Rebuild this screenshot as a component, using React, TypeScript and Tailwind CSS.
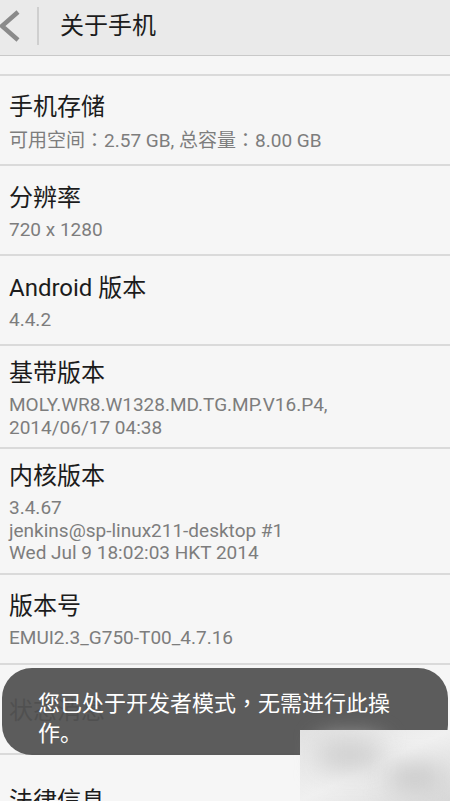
import React from 'react';

interface InfoRow {
  title: string;
  lines: React.ReactNode[];
}

// fullwidth punctuation sits centred in the reference, as in the TC face
const P = ({ c }: { c: string }) => (
  <span style={{ fontFamily: '"Noto Sans CJK TC", sans-serif' }}>{c}</span>
);

const rows: InfoRow[] = [
  {
    title: '手机存储',
    lines: [
      <>
        可用空间<P c="：" />2.57 GB, 总容量<P c="：" />8.00 GB
      </>,
    ],
  },
  { title: '分辨率', lines: ['720 x 1280'] },
  { title: 'Android 版本', lines: ['4.4.2'] },
  { title: '基带版本', lines: ['MOLY.WR8.W1328.MD.TG.MP.V16.P4,', '2014/06/17 04:38'] },
  {
    title: '内核版本',
    lines: ['3.4.67', 'jenkins@sp-linux211-desktop #1', 'Wed Jul 9 18:02:03 HKT 2014'],
  },
  { title: '版本号', lines: ['EMUI2.3_G750-T00_4.7.16'] },
  { title: '状态消息', lines: [] },
  { title: '法律信息', lines: [] },
];

const font = { fontFamily: 'Roboto, "Noto Sans CJK SC", sans-serif' };

export default function App() {
  return (
    <div className="relative w-[450px] h-[801px] overflow-hidden bg-[#f6f6f6]" style={font}>
      {/* Action bar */}
      <div className="h-[56px] flex items-center bg-[#eaeaea] border-b border-[#c9c9c9]">
        <svg width="20" height="48" viewBox="0 0 20 48" className="shrink-0 -mt-[4px]">
          <polyline points="18,10 2,24 18,38" fill="none" stroke="#8a8a8a" strokeWidth="4.5" />
        </svg>
        <div className="ml-[17px] -mt-[4px] w-[2px] h-[38px] bg-[#cfcfcf]" />
        <span className="ml-[21px] -mt-[4px] text-[24px] leading-none text-[#1c1c1c]">关于手机</span>
      </div>

      <div className="h-[18px]" />

      {/* Settings list */}
      <div className="flex flex-col">
        {rows.map((row) => (
          <div
            key={row.title}
            className="min-h-[90px] flex flex-col justify-center px-[9px] pt-[12px] pb-[8px] border-t-2 border-[#dadada]"
          >
            <div className="text-[24px] leading-[30px] text-[#1c1c1c]">{row.title}</div>
            {row.lines.length > 0 && (
              <div className="mt-[6px] flex flex-col">
                {row.lines.map((line, i) => (
                  <div key={i} className="text-[19px] leading-[22.5px] text-[#7d7d7d]">
                    {line}
                  </div>
                ))}
              </div>
            )}
          </div>
        ))}
      </div>

      {/* Toast */}
      <div className="absolute left-[2px] top-[668px] w-[446px] h-[87px] rounded-[30px] bg-[#535353]/95 pl-[36px] pr-[37px] pt-[18px]">
        <p className="text-[22px] leading-[30px] text-white">
          您已处于开发者模式<P c="，" />无需进行此操作。
        </p>
      </div>

      {/* Mosaic patch */}
      <div className="absolute left-[300px] top-[730px] w-[150px] h-[71px] bg-gradient-to-br from-[#e2e2e2] via-[#f0f0f0] to-[#d9d9d9]">
        <div className="absolute left-[20px] top-[10px] w-[60px] h-[30px] bg-[#cfcfcf] blur-md" />
        <div className="absolute left-[90px] top-[35px] w-[50px] h-[25px] bg-[#c9c9c9] blur-md" />
      </div>
    </div>
  );
}
